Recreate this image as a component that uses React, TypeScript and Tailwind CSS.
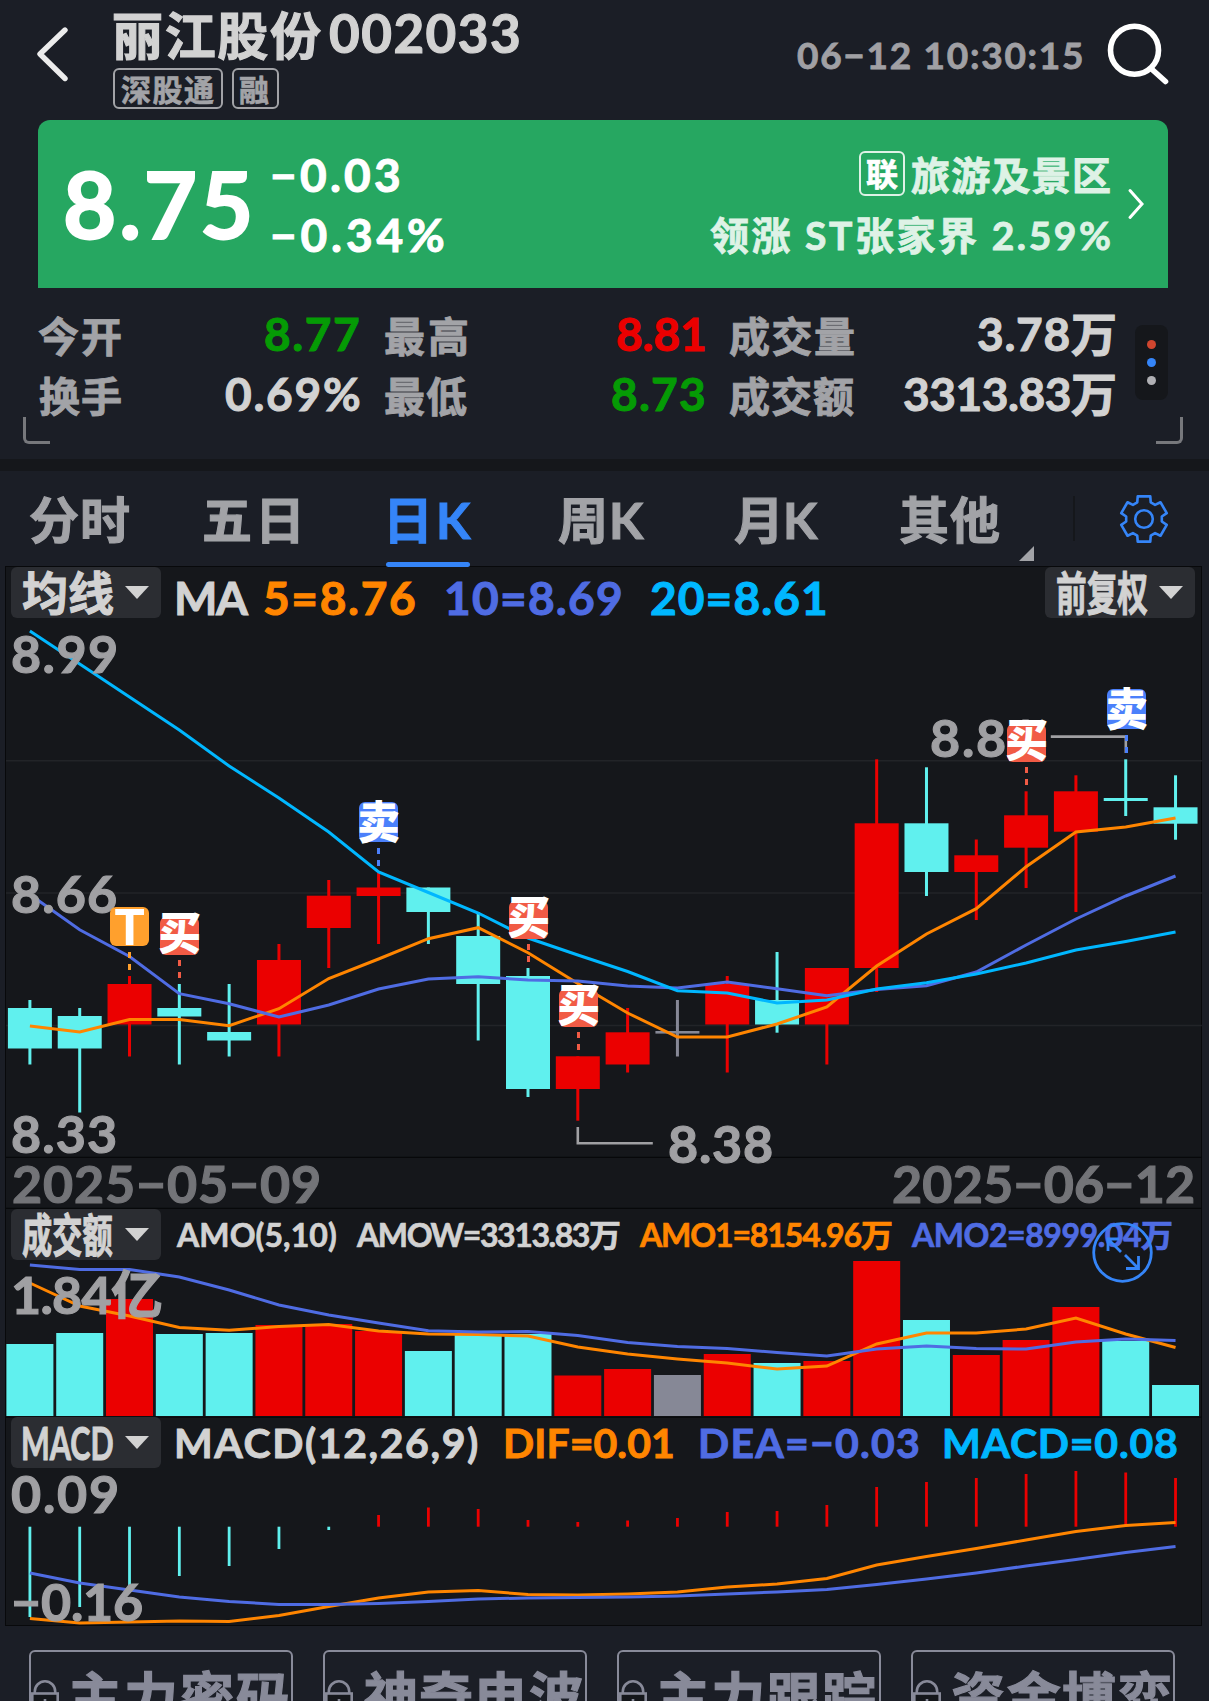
import { useLayoutEffect, useRef } from 'react';

/** One line of text whose glyphs are spread (or squeezed) over the width of its box. */
function T({ children, className = '', squeeze = false }: { children: string; className?: string; squeeze?: boolean }) {
  const box = useRef<HTMLDivElement>(null);
  const ink = useRef<HTMLSpanElement>(null);
  useLayoutEffect(() => {
    const b = box.current;
    const s = ink.current;
    const ctx = document.createElement('canvas').getContext('2d');
    if (!b || !s || !ctx) return;
    const cs = getComputedStyle(s);
    ctx.font = `${cs.fontWeight} ${cs.fontSize} ${cs.fontFamily}`;
    const m = ctx.measureText(children);
    const natural = m.actualBoundingBoxLeft + m.actualBoundingBoxRight;
    const width = b.clientWidth + 1;
    if (squeeze || children.length < 2) {
      const k = squeeze ? width / natural : 1;
      s.style.transform = `scaleX(${k})`;
      s.style.marginLeft = `${m.actualBoundingBoxLeft * k - 1}px`;
    } else {
      s.style.letterSpacing = `${(width - natural) / (children.length - 1)}px`;
      s.style.marginLeft = `${m.actualBoundingBoxLeft - 1}px`;
    }
  }, [children, squeeze]);
  return (
    <div ref={box} className={`shrink-0 whitespace-nowrap ${className}`}>
      <span ref={ink} className="inline-block origin-left whitespace-pre [-webkit-text-stroke:0.022em]">{children}</span>
    </div>
  );
}

const RED = '#eb0000';
const CYAN = '#60f0ee';
const GRAY = '#868896';
const ORANGE = '#ff8500';
const INDIGO = '#4f6ce3';
const SKY = '#00b7ff';

const X0 = 30.1;
const STEP = 49.81;
const cx = (i: number) => X0 + i * STEP;

// colour, body top, body bottom, wick top, wick bottom
const candles: [string, number, number, number, number][] = [
  [CYAN, 1008, 1048.5, 1000, 1064.5],
  [CYAN, 1016, 1048.5, 1008, 1112.5],
  [RED, 984, 1024.5, 976, 1056.5],
  [CYAN, 1008, 1016.5, 984, 1064.5],
  [CYAN, 1032, 1040.5, 984, 1056.5],
  [RED, 960, 1024.5, 944, 1056.5],
  [RED, 895.7, 928, 880, 968],
  [RED, 887.5, 896, 873, 944],
  [CYAN, 887.5, 912, 887.5, 944],
  [CYAN, 936, 984, 912, 1040.5],
  [CYAN, 976, 1089, 968, 1097],
  [RED, 1056.3, 1089, 1056.3, 1120.7],
  [RED, 1032.3, 1064.5, 1008, 1072.5],
  [GRAY, 1031, 1033.6, 1000, 1056.5],
  [RED, 984, 1024.5, 976, 1072.5],
  [CYAN, 1000, 1024.5, 952, 1032.7],
  [RED, 968, 1024.5, 968, 1064.5],
  [RED, 823.3, 968, 759.3, 992],
  [CYAN, 823.3, 872, 767.3, 896],
  [RED, 855.3, 872, 839.5, 920],
  [RED, 815.3, 847.7, 791.3, 888],
  [RED, 791.3, 831.7, 775.3, 912],
  [CYAN, 798, 801, 759.3, 816],
  [CYAN, 807.3, 823.7, 775.3, 839.7],
];

const ma20 = [631, 664, 697, 730, 766, 798, 832, 872, 892.5, 913, 938, 955, 971.5, 990.7, 993, 1003, 1000, 989, 982.7, 974, 963, 950, 941.5, 932];
const ma10 = [894.6, 929.7, 956.5, 993.7, 1003.7, 1017, 1005, 989, 979, 976.7, 980, 981, 986, 988, 982, 988.7, 995.7, 989.5, 985.7, 972, 945, 919, 896, 876];
const ma5 = [1026, 1032, 1019.5, 1019.5, 1025.7, 1008.7, 978.5, 959, 938.7, 927.7, 952.7, 983.5, 1013, 1037, 1037, 1024, 1007, 966, 934, 908.7, 866.7, 832, 827, 818];

const amount = [1344, 1333, 1299, 1334, 1333, 1325, 1324, 1331, 1351, 1335, 1334, 1375.5, 1369, 1375, 1354, 1363, 1361, 1261, 1320, 1355, 1340, 1307, 1341, 1385];
const amo10 = [1265, 1269.5, 1269.5, 1277, 1290, 1305, 1315, 1323, 1330.7, 1332, 1331.5, 1335.5, 1342.5, 1346.5, 1348.5, 1352.5, 1356, 1349, 1346, 1348.5, 1349, 1342, 1339, 1340.5];
const amo5 = [1283, 1306, 1316, 1327.5, 1330.3, 1326.5, 1324.5, 1331, 1334, 1334.5, 1336, 1347, 1354, 1359, 1363, 1369, 1366, 1344, 1333, 1333, 1329, 1318, 1334, 1347.5];

const hist = [1617, 1607, 1585, 1576, 1566, 1549, 1530, 1515, 1507.5, 1509, 1520, 1522, 1520.5, 1518, 1512, 1511, 1505, 1487, 1482, 1478, 1474, 1471, 1472.5, 1478];
const dif = [1618.5, 1623, 1622, 1621, 1621.5, 1615.5, 1606.5, 1598, 1592, 1590.5, 1594.5, 1595, 1594, 1592, 1587, 1584, 1578.5, 1565, 1556.5, 1548.5, 1540, 1531.5, 1525.5, 1522.5];
const dea = [1573, 1583, 1590, 1597, 1601.5, 1604.5, 1604.5, 1603.5, 1601.5, 1599, 1598, 1597.5, 1597, 1596, 1594, 1592, 1589.5, 1584.5, 1579, 1573, 1566, 1559.5, 1552.5, 1546.5];

function Line({ ys, color }: { ys: number[]; color: string }) {
  return <polyline points={ys.map((y, i) => `${cx(i)},${y}`).join(' ')} fill="none" stroke={color} strokeWidth="3" />;
}

function Charts() {
  return (
    <svg className="absolute inset-0" width="1196" height="1059" viewBox="6.2 567 1196 1059">
      <g stroke="#222428" strokeWidth="1.5">
        <path d="M5 760.7H1202M5 893H1202M5 1025.4H1202" />
      </g>
      <g stroke="#07080a" strokeWidth="1.3">
        <path d="M5 1157.4H1202M5 1208.4H1202M5 1417.2H1202" />
      </g>
      {candles.map(([c, t, b, wt, wb], i) => (
        <g key={i} fill={c}>
          <rect x={cx(i) - 1.5} y={wt} width="3" height={wb - wt} />
          <rect x={cx(i) - 22} y={t} width="44" height={b - t} />
        </g>
      ))}
      <Line ys={ma5} color={ORANGE} />
      <Line ys={ma10} color={INDIGO} />
      <Line ys={ma20} color={SKY} />
      <path d="M578 1127V1143.3H653M1051 736.6H1126V753" fill="none" stroke="#a0a0a3" strokeWidth="2.6" />

      {candles.map(([c], i) => (
        <rect key={i} x={cx(i) - 23.5} y={amount[i]} width="47" height={1416 - amount[i]} fill={c} />
      ))}
      <Line ys={amo5} color={ORANGE} />
      <Line ys={amo10} color={INDIGO} />

      {hist.map((y, i) => (
        <rect key={i} x={cx(i) - 1.4} y={Math.min(y, 1526.7)} width="2.8" height={Math.abs(y - 1526.7)} fill={y < 1526.7 ? RED : CYAN} />
      ))}
      <Line ys={dif} color={ORANGE} />
      <Line ys={dea} color={INDIGO} />
    </svg>
  );
}

function Drop({ label, className = '', squeeze = false }: { label: string; className?: string; squeeze?: boolean }) {
  return (
    <div className={`flex h-[51px] w-[150px] shrink-0 items-center rounded-md bg-[#2b2d32] pl-[13px] text-[#d2d2d2] ${className}`}>
      <T squeeze={squeeze} className="w-[89px] text-[46px] leading-[51px]">{label}</T>
      <svg className="ml-[12px]" width="24" height="13" viewBox="0 0 24 13">
        <path d="M0 0H24L12 13Z" fill="#d2d2d2" />
      </svg>
    </div>
  );
}

function Marker({ kind, className }: { kind: 'buy' | 'sell' | 't'; className: string }) {
  const bg = kind === 'buy' ? 'bg-[#f15b45]' : kind === 'sell' ? 'bg-[#4b80fb]' : 'bg-[#ffa02d]';
  const box = kind === 'buy' ? 'mt-[5px] h-[38px]' : kind === 'sell' ? 'mt-[3px] h-[40px]' : 'h-[39px]';
  const dash = kind === 'buy' ? 'mt-[5px]' : 'mt-[6px]';
  return (
    <div className={`absolute flex w-[39px] flex-col items-center ${className}`}>
      <div className={`w-full rounded-md ${bg} ${box}`} />
      <div className={`h-[6px] w-[3px] ${bg} ${dash}`} />
      <div className={`mt-[6px] h-[6px] w-[3px] ${bg}`} />
      {kind === 't' ? (
        <div className="absolute inset-x-0 top-[-6px] text-center text-[50px] leading-[50px] font-black text-white">T</div>
      ) : (
        <div className={`absolute left-[-3px] w-[45px] scale-x-95 text-center text-[45px] leading-[45px] font-black text-white ${kind === 'buy' ? 'top-[-1px]' : 'top-[1px]'}`}>{kind === 'buy' ? '买' : '卖'}</div>
      )}
    </div>
  );
}

const axis = 'absolute text-[52px] leading-[52px] text-[#a0a0a3]';

function ChartPanel() {
  return (
    <div className="relative ml-[5px] h-[1060px] w-[1197px] border border-[#08090b] bg-[#15171b]">
      <Charts />
      <div className={`${axis} top-[60px] left-[8px]`}><T className="w-[102px]">8.99</T></div>
      <div className={`${axis} top-[300px] left-[8px]`}><T className="w-[102px]">8.66</T></div>
      <div className={`${axis} top-[540px] left-[8px]`}><T className="w-[101px]">8.33</T></div>
      <div className={`${axis} top-[550px] left-[665px]`}><T className="w-[101px]">8.38</T></div>
      <div className={`${axis} top-[144px] left-[927px]`}><T className="w-[102px]">8.81</T></div>
      <div className={`${axis} top-[701px] left-[9px]`}><T className="w-[146px]">1.84亿</T></div>
      <div className={`${axis} top-[900px] left-[7px]`}><T className="w-[104px]">0.09</T></div>
      <div className={`${axis} top-[1008px] left-[9px]`}><T className="w-[127px]">−0.16</T></div>

      <Marker kind="t" className="top-[340px] left-[104px]" />
      <Marker kind="buy" className="top-[345px] left-[154px]" />
      <Marker kind="sell" className="top-[232px] left-[353px]" />
      <Marker kind="buy" className="top-[329px] left-[503px]" />
      <Marker kind="buy" className="top-[417px] left-[553px]" />
      <Marker kind="buy" className="top-[152px] left-[1001px]" />
      <Marker kind="sell" className="top-[119px] left-[1101px]" />

      <div className="relative flex h-[591px] pl-[5px] text-[46px] leading-[51px]">
        <Drop label="均线" />
        <div className="flex pt-[5px] pl-[17px]">
          <T className="w-[71px] text-[#d2d2d2]">MA</T>
          <T className="ml-[17px] w-[149px] text-[#ff8500]">5=8.76</T>
          <T className="ml-[33px] w-[173px] text-[#4f6ce3]">10=8.69</T>
          <T className="ml-[31px] w-[173px] text-[#00b7ff]">20=8.61</T>
        </div>
        <Drop label="前复权" squeeze className="mr-[6px] ml-auto" />
      </div>

      <div className="relative flex h-[50px] justify-between pr-[8px] pl-[8px] text-[52px] leading-[50px] text-[#737478]">
        <T className="w-[305px]">2025−05−09</T>
        <T className="w-[299px]">2025−06−12</T>
      </div>

      <div className="relative flex h-[209px] pt-[1px] pl-[5px] text-[32px] leading-[51px]">
        <Drop label="成交额" squeeze />
        <div className="flex pl-[16px]">
          <T className="w-[159px] text-[#d2d2d2]">AMO(5,10)</T>
          <T className="ml-[21px] w-[263px] text-[#d2d2d2]">AMOW=3313.83万</T>
          <T className="ml-[20px] w-[252px] text-[#ff8500]">AMO1=8154.96万</T>
          <T className="ml-[20px] w-[260px] text-[#4f6ce3]">AMO2=8999.04万</T>
        </div>
        <svg className="absolute top-[13px] left-[1085px]" width="63" height="63" viewBox="0 0 63 63" fill="none" stroke="#3585f8" strokeWidth="2.8">
          <circle cx="31.5" cy="31.5" r="28.8" />
          <path d="M28 18H17V30M17 18L30 31M34 34L47 47M35 47.5H47.5V35" />
        </svg>
      </div>

      <div className="relative flex pl-[5px] text-[41px] leading-[52px]">
        <Drop label="MACD" squeeze />
        <div className="flex pl-[17px]">
          <T className="w-[299px] text-[#d2d2d2]">MACD(12,26,9)</T>
          <T className="ml-[30px] w-[166px] text-[#ff8500]">DIF=0.01</T>
          <T className="ml-[29px] w-[216px] text-[#4f6ce3]">DEA=−0.03</T>
          <T className="ml-[28px] w-[231px] text-[#00b7ff]">MACD=0.08</T>
        </div>
      </div>
    </div>
  );
}

function Header() {
  return (
    <header className="flex h-[120px]">
      <svg className="mt-[26px] ml-[34px]" width="36" height="56" viewBox="35 26 36 56" fill="none" stroke="#ececec" strokeWidth="5.4" strokeLinecap="round" strokeLinejoin="round">
        <path d="M66 30L41 54L66 78.5" />
      </svg>
      <div className="pt-[10px] pl-[43px]">
        <div className="flex pl-[2px] text-[#d2d2d2]">
          <T className="w-[206px] text-[51px] leading-[52px]">丽江股份</T>
          <T className="ml-[10px] w-[188px] text-[53px] leading-[46px]">002033</T>
        </div>
        <div className="mt-[6px] flex gap-[9px] text-[30px] leading-[38px] text-[#a2a3a7]">
          <div className="h-[41px] w-[110px] rounded-md border-2 border-[#a2a3a7] pl-[7px]"><T className="w-[92px]">深股通</T></div>
          <div className="h-[41px] w-[47px] rounded-md border-2 border-[#a2a3a7] pl-[7px]"><T className="w-[29px]">融</T></div>
        </div>
      </div>
      <T className="mt-[35px] ml-auto w-[284px] text-[37px] leading-[40px] text-[#a0a0a4]">06−12 10:30:15</T>
      <svg className="mt-[22px] mr-[40px] ml-[23px]" width="64" height="64" viewBox="1105 22 64 64" fill="none" stroke="#fff" strokeWidth="5.6" strokeLinecap="round">
        <circle cx="1134.5" cy="50.3" r="24" />
        <path d="M1151 68.5L1165.5 81.5" />
      </svg>
    </header>
  );
}

function Quote() {
  return (
    <section className="ml-[38px] flex h-[168px] w-[1130px] rounded-t-xl bg-[#26a761] text-white">
      <T className="mt-[38px] ml-[29px] w-[182px] text-[92px] leading-[92px]">8.75</T>
      <div className="pt-[25px] pl-[25px] text-[46px] leading-[60px]">
        <T className="w-[125px]">−0.03</T>
        <T className="w-[169px]">−0.34%</T>
      </div>
      <div className="ml-auto flex flex-col items-end pt-[25px] text-[39px] leading-[60px] text-[#def2e6]">
        <div className="flex">
          <div className="mt-[6px] mr-[7px] h-[45px] w-[46px] rounded-md border-2 border-[#def2e6] pl-[6px] text-[32px] leading-[41px] text-white">
            <T className="w-[30px]">联</T>
          </div>
          <T className="w-[198px]">旅游及景区</T>
        </div>
        <T className="w-[399px]">领涨 ST张家界 2.59%</T>
      </div>
      <svg className="mt-[68px] mr-[23px] ml-[17px]" width="18" height="32" viewBox="0 0 18 32" fill="none" stroke="#fff" strokeWidth="3" strokeLinecap="round">
        <path d="M3 2.5L15 16L3 29.5" />
      </svg>
    </section>
  );
}

function Stat({ label, lw, value, vw }: { label: string; lw: string; value: string; vw: string }) {
  return (
    <div className="flex h-[60px] justify-between">
      <T className={`text-[41px] leading-[61px] text-[#a2a3a7] ${lw}`}>{label}</T>
      <T className={`text-[46px] leading-[56px] ${vw}`}>{value}</T>
    </div>
  );
}

function Stats() {
  return (
    <section className="relative flex h-[171px] pt-[18px] pl-[40px]">
      <div className="grid h-[120px] grid-cols-[319px_318px_384px] gap-x-[27px]">
        <Stat label="今开" lw="w-[81px]" value="8.77" vw="w-[93px] text-[#059b05]" />
        <Stat label="最高" lw="w-[81px]" value="8.81" vw="w-[86px] text-[#eb0000]" />
        <Stat label="成交量" lw="w-[123px]" value="3.78万" vw="w-[136px] text-[#d2d2d2]" />
        <Stat label="换手" lw="w-[81px]" value="0.69%" vw="w-[132px] text-[#d2d2d2]" />
        <Stat label="最低" lw="w-[81px]" value="8.73" vw="w-[91px] text-[#059b05]" />
        <Stat label="成交额" lw="w-[123px]" value="3313.83万" vw="w-[210px] text-[#d2d2d2]" />
      </div>
      <div className="mt-[19px] ml-[20px] flex h-[75px] w-[33px] flex-col items-center justify-center gap-[9px] rounded-lg bg-[#15171b]">
        <i className="size-[9px] rounded-full bg-[#d0462f]" />
        <i className="size-[9px] rounded-full bg-[#3585f8]" />
        <i className="size-[9px] rounded-full bg-[#b0b0b4]" />
      </div>
      <div className="absolute top-[129px] left-[23px] h-[27px] w-[27px] rounded-bl-md border-b-[3px] border-l-[3px] border-[#77787c]" />
      <div className="absolute top-[129px] left-[1156px] h-[27px] w-[27px] rounded-br-md border-r-[3px] border-b-[3px] border-[#77787c]" />
    </section>
  );
}

const gear = (() => {
  // six-tooth outline built from polar coordinates
  const pts: string[] = [];
  for (let k = 0; k < 6; k++) {
    const a = k * 60 - 90;
    for (const [da, r] of [[-22, 18], [-15.5, 23.5], [15.5, 23.5], [22, 18]]) {
      const t = ((a + da) * Math.PI) / 180;
      pts.push(`${(25 + r * Math.cos(t)).toFixed(2)},${(25 + r * Math.sin(t)).toFixed(2)}`);
    }
  }
  return pts.join(' ');
})();

function Tabs() {
  return (
    <nav className="relative flex h-[95px] pl-[31px] text-[50px] leading-[98px] text-[#a2a3a7]">
      <T className="w-[98px]">分时</T>
      <T className="ml-[76px] w-[93px]">五日</T>
      <T className="ml-[93px] w-[80px] text-[#3585f8]">日K</T>
      <T className="ml-[89px] w-[84px]">周K</T>
      <T className="ml-[92px] w-[82px]">月K</T>
      <T className="ml-[83px] w-[98px]">其他</T>
      <svg className="mt-[75px] ml-[20px]" width="15" height="15" viewBox="0 0 15 15"><path d="M15 0V15H0Z" fill="#a2a3a7" /></svg>
      <div className="mt-[25px] ml-[39px] h-[45px] w-[2px] bg-[#15171b]" />
      <svg className="mt-[23px] ml-[44px]" width="50" height="50" viewBox="0 0 50 50" fill="none" stroke="#3585f8" strokeWidth="2.6" strokeLinejoin="round">
        <polygon points={gear} />
        <circle cx="25" cy="25" r="8.8" />
      </svg>
      <div className="absolute bottom-[-1px] left-[386px] z-10 h-[5px] w-[84px] rounded-sm bg-[#3585f8]" />
    </nav>
  );
}

function Tools() {
  return (
    <div className="mt-[24px] ml-[29px] flex gap-[30px]">
      {['主力密码', '神奇电波', '主力跟踪', '资金博弈'].map((name) => (
        <div key={name} className="flex h-[90px] w-[264px] shrink-0 rounded-md border-2 border-[#888a99] text-[#888a99]">
          <svg className="mt-[28px] shrink-0" width="28" height="40" viewBox="0 0 28 40" fill="none" stroke="#888a99" strokeWidth="2.6">
            <path d="M3.8 13.5V11.5A10.2 10.2 0 0 1 24.2 11.5V13.5" />
            <rect x="1.3" y="13.5" width="25.4" height="22" fill="#15171b" />
            <path d="M14 19V28" />
          </svg>
          <T className="mt-[17px] ml-[12px] w-[217px] text-[54px] leading-[58px]">{name}</T>
        </div>
      ))}
    </div>
  );
}

export default function App() {
  return (
    <div className="h-[1701px] w-[1209px] overflow-hidden bg-[#1b1e26] font-['Lato','Noto_Sans_CJK_SC',sans-serif] font-bold">
      <Header />
      <Quote />
      <Stats />
      <div className="h-[12px] bg-[#15171b]" />
      <Tabs />
      <ChartPanel />
      <Tools />
    </div>
  );
}
